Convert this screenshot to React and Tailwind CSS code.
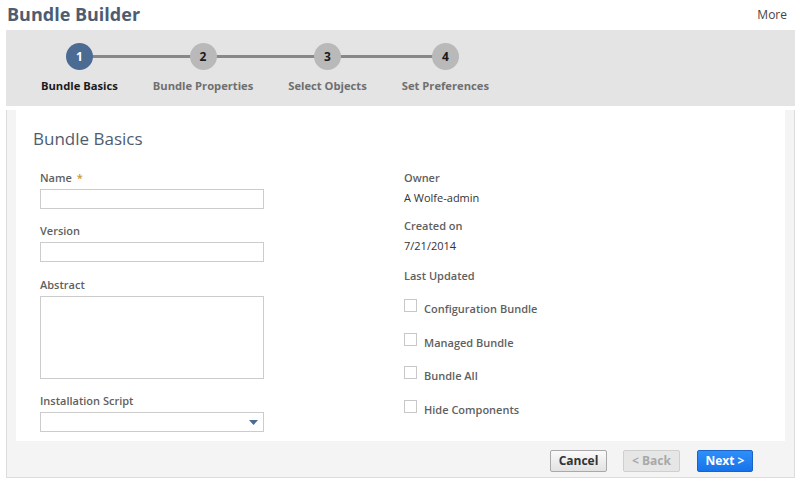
const font = { fontFamily: '"Open Sans", "Liberation Sans", sans-serif' };

const steps = [
  { n: 1, label: "Bundle Basics", active: true },
  { n: 2, label: "Bundle Properties" },
  { n: 3, label: "Select Objects" },
  { n: 4, label: "Set Preferences" },
];

const Stepper = () => (
  <div className="relative flex gap-[35px] pl-[35px] pt-[13px] w-fit">
    <div className="absolute left-[74px] right-[44px] top-[25px] h-[3px] bg-[#888888]" />
    {steps.map((s) => (
      <div key={s.n} className="relative flex flex-col items-center">
        <div
          className={
            "flex h-[27px] w-[27px] items-center justify-center rounded-full text-[12px] font-bold " +
            (s.active ? "bg-[#4b6b93] text-white" : "bg-[#b9b9b9] text-[#1a1a1a]")
          }
        >
          {s.n}
        </div>
        <span
          className={
            "mt-[8px] text-[11.2px] font-bold leading-[15px] whitespace-nowrap " +
            (s.active ? "text-[#1a1a1a]" : "text-[#6f6f6f]")
          }
        >
          {s.label}
        </span>
      </div>
    ))}
  </div>
);

const Label = ({ children, className = "" }) => (
  <div className={"text-[11px] font-semibold leading-[15px] text-[#5f5f5f] " + className}>{children}</div>
);

const Field = ({ label, required, className = "", children }) => (
  <div className={className}>
    <Label className="mb-[4px]">
      {label}
      {required && <span className="ml-[5px] text-[#c9953c]">*</span>}
    </Label>
    {children}
  </div>
);

const Check = ({ label }) => (
  <label className="flex items-start gap-[7px] h-[33.7px]">
    <span className="block h-[13px] w-[13px] border border-[#c8c8c8] bg-white" />
    <span className="mt-[2px] text-[11px] font-semibold leading-[15px] text-[#5f5f5f]">{label}</span>
  </label>
);

const Info = ({ label, value, className = "" }) => (
  <div className={className}>
    <Label>{label}</Label>
    {value && <div className="mt-[5px] text-[11px] leading-[15px] text-[#333333]">{value}</div>}
  </div>
);

export default function App() {
  return (
    <div style={font} className="h-[488px] w-[801px] bg-white">
      <div className="flex items-start justify-between px-[7px] pt-[2px] h-[30px]">
        <h1 className="text-[18px] font-bold leading-[24px] text-[#4d5c72]">Bundle Builder</h1>
        <span className="mt-[5px] mr-[7px] text-[12px] leading-[16px] text-[#444444]">More</span>
      </div>

      <div className="mx-[6px] h-[76px] bg-[#e4e4e4]">
        <Stepper />
      </div>

      <div className="mx-[6px] mt-[4px] h-[368px] border border-t-0 border-[#dcdcdc] bg-[#f4f4f4] px-[9px]">
        <div className="h-[331px] bg-white pl-[17px] pt-[17px]">
          <h2 className="text-[17px] leading-[24px] text-[#4e5d6e]">Bundle Basics</h2>
          <div className="mt-[19px] flex">
            <div className="w-[367px] pl-[7px]">
              <Field label="Name" required>
                <div className="h-[20px] w-[224px] border border-[#cccccc] bg-white" />
              </Field>
              <Field label="Version" className="mt-[14px]">
                <div className="h-[20px] w-[224px] border border-[#cccccc] bg-white" />
              </Field>
              <Field label="Abstract" className="mt-[15px]">
                <div className="h-[83px] w-[224px] border border-[#cccccc] bg-white" />
              </Field>
              <Field label="Installation Script" className="mt-[14px]">
                <div className="flex h-[20px] w-[224px] items-center justify-end border border-[#cccccc] bg-white pr-[5px]">
                  <svg width="9" height="5" viewBox="0 0 9 5">
                    <path d="M0 0h9L4.5 5z" fill="#4b6b93" />
                  </svg>
                </div>
              </Field>
            </div>
            <div className="pl-[4px]">
              <Info label="Owner" value="A Wolfe-admin" />
              <Info label="Created on" value="7/21/2014" className="mt-[13px]" />
              <Info label="Last Updated" className="mt-[15px]" />
              <div className="mt-[16px]">
                <Check label="Configuration Bundle" />
                <Check label="Managed Bundle" />
                <Check label="Bundle All" />
                <Check label="Hide Components" />
              </div>
            </div>
          </div>
        </div>

        <div className="flex justify-end gap-[16px] pt-[9px] pr-[32px]">
          <button className="h-[22px] w-[57px] rounded-[2px] border border-[#a9a9a9] bg-gradient-to-b from-[#fafafa] to-[#e2e2e2] text-[12px] font-bold text-[#333333]">
            Cancel
          </button>
          <button className="h-[22px] w-[57px] rounded-[2px] border border-[#cfcfcf] bg-[#e6e6e6] text-[12px] font-bold text-[#a8a8a8]">
            &lt; Back
          </button>
          <button className="ml-[1px] h-[22px] w-[56px] rounded-[2px] border border-[#1b63c6] bg-gradient-to-b from-[#2f8ff8] to-[#1673ea] text-[12px] font-bold text-white">
            Next &gt;
          </button>
        </div>
      </div>
    </div>
  );
}
